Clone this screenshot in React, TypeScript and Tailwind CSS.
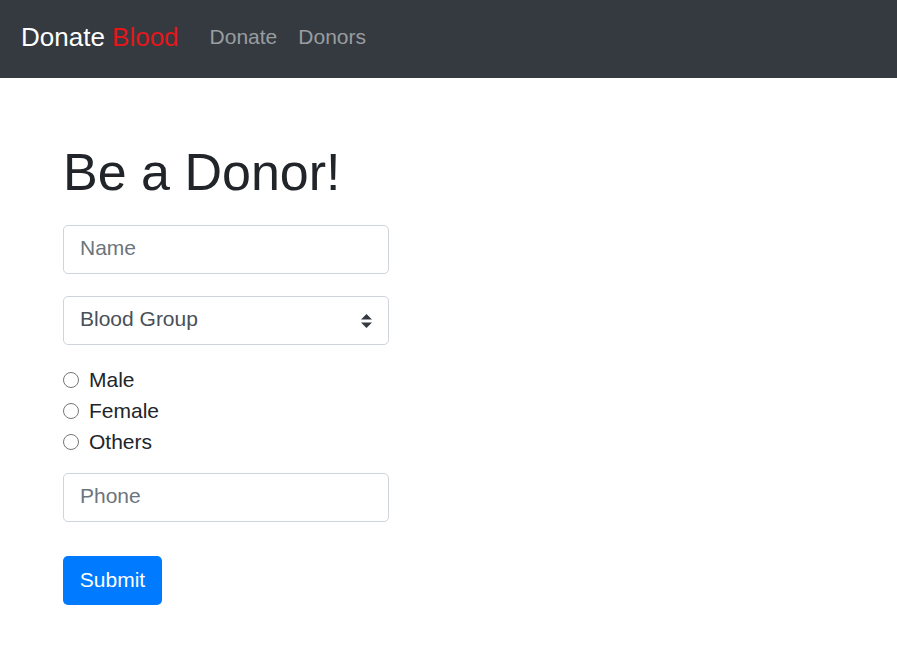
export default function App() {
  const genders = ["Male", "Female", "Others"];

  return (
    <div className="min-h-screen w-full bg-white font-['Liberation_Sans',Arial,sans-serif] text-[#212529]">
      {/* Navbar */}
      <nav className="flex h-[78px] items-center bg-[#343a40] px-[21px] pb-[5px]">
        <span className="mr-[31px] text-[26px] leading-none text-white">
          Donate <span className="text-[#e3171b]">Blood</span>
        </span>
        <div className="flex gap-[21px] text-[21px] text-[#9a9da0]">
          <span>Donate</span>
          <span>Donors</span>
        </div>
      </nav>

      {/* Form */}
      <div className="px-[63px] pt-[63px]">
        <h1 className="text-[52px] leading-[1.2]">Be a Donor!</h1>
        <div className="mt-[22px] flex w-[326px] flex-col">
          <input
            className="h-[49px] rounded-[5px] border border-[#ced4da] px-[16px] pb-[4px] text-[21px] outline-none placeholder:text-[#6c757d]"
            placeholder="Name"
          />
          <div className="relative mt-[22px] flex h-[49px] items-center rounded-[5px] border border-[#ced4da] px-[16px] pb-[4px] text-[21px] text-[#495057]">
            Blood Group
            <svg className="absolute right-[16px] top-[17px]" width="11" height="14" viewBox="0 0 11 14">
              <path d="M5.5 0 L11 5.5 H0 Z M5.5 14 L0 8.5 H11 Z" fill="#343a40" />
            </svg>
          </div>
          <div className="mt-[19px] flex flex-col">
            {genders.map((g) => (
              <label key={g} className="flex h-[31px] items-center gap-[10px] text-[21px]">
                <span className="h-[16px] w-[16px] rounded-full border border-[#767676] bg-white" />
                {g}
              </label>
            ))}
          </div>
          <input
            className="mt-[16px] h-[49px] rounded-[5px] border border-[#ced4da] px-[16px] pb-[4px] text-[21px] outline-none placeholder:text-[#6c757d]"
            placeholder="Phone"
          />
          <button className="mt-[34px] h-[49px] w-[99px] rounded-[5px] bg-[#007bff] pb-[2px] text-[21px] text-white">
            Submit
          </button>
        </div>
      </div>
    </div>
  );
}
